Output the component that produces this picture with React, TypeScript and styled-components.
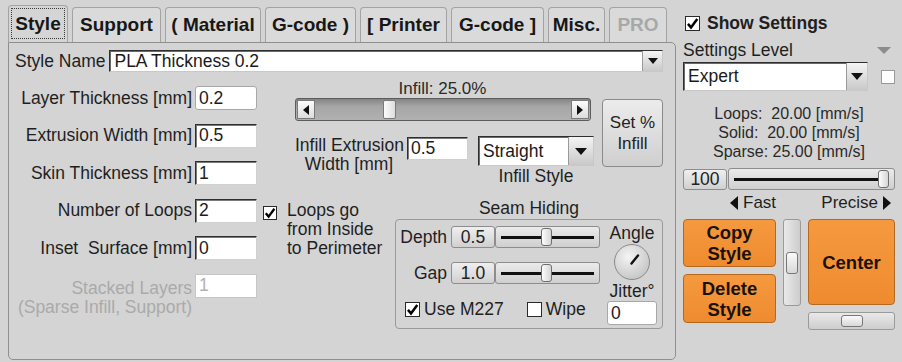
import React from 'react';
import styled, { createGlobalStyle, css } from 'styled-components';

const FONT = `"Liberation Sans", Arial, sans-serif`;

const GlobalStyle = createGlobalStyle`
  html, body { margin: 0; padding: 0; background: #d4d4d4; }
  body { font-family: ${FONT}; color: #202020; }
  * { box-sizing: border-box; }
`;

const Root = styled.div`
  width: 902px;
  height: 362px;
  overflow: hidden;
  display: flex;
  align-items: flex-start;
  padding: 5px 0 0 8px;
  background: #d4d4d4;
`;

const Main = styled.div`
  width: 668px;
  display: flex;
  flex-direction: column;
  flex: none;
`;

const TabBar = styled.div`
  display: flex;
  align-items: flex-end;
  gap: 4px;
  height: 37px;
`;

const Tab = styled.div<{ $w: number; $active?: boolean; $disabled?: boolean }>`
  width: ${p => p.$w}px;
  height: ${p => (p.$active ? 37 : 35)}px;
  flex: none;
  border: 1px solid #a3a3a3;
  border-bottom: none;
  border-radius: 4px 4px 0 0;
  background: ${p => (p.$active ? '#d5d5d5' : '#dadada')};
  display: flex;
  align-items: center;
  justify-content: center;
  font: bold 19px ${FONT};
  color: ${p => (p.$disabled ? '#a8a8a8' : '#171717')};
  white-space: nowrap;
  ${p =>
    p.$active &&
    css`
      outline: 1px dotted #3a3a3a;
      outline-offset: -4px;
    `}
`;

const Panel = styled.div`
  height: 318px;
  border: 1px solid #8f8f8f;
  border-radius: 0 5px 5px 5px;
  padding: 7px 0 0 6px;
  display: flex;
  flex-direction: column;
`;

const Text = styled.span<{ $size?: number; $bold?: boolean; $disabled?: boolean }>`
  font-family: ${FONT};
  font-size: ${p => p.$size ?? 17.5}px;
  font-weight: ${p => (p.$bold ? 'bold' : 'normal')};
  color: ${p => (p.$disabled ? '#a9a9a9' : '#1f1f1f')};
  white-space: nowrap;
`;

const NameRow = styled.div`
  display: flex;
  align-items: center;
  gap: 4px;
  height: 22px;
`;

const Select = styled.div<{ $w: number; $h: number }>`
  width: ${p => p.$w}px;
  height: ${p => p.$h}px;
  flex: none;
  background: #fff;
  border: 1px solid;
  border-color: #2e2e2e #c8c8c8 #c8c8c8 #2e2e2e;
  box-shadow: inset 1px 1px 0 #6a6a6a;
  display: flex;
  align-items: center;
  padding-left: 4px;
  font: 17.5px ${FONT};
  color: #1a1a1a;
  white-space: nowrap;
`;

const DropBtn = styled.div<{ $w: number; $inset?: number }>`
  margin-left: auto;
  align-self: stretch;
  margin: ${p => p.$inset ?? 0}px ${p => p.$inset ?? 0}px ${p => p.$inset ?? 0}px auto;
  width: ${p => p.$w}px;
  background: linear-gradient(#f4f4f4, #c9c9c9);
  border-left: 1px solid #9a9a9a;
  display: flex;
  align-items: center;
  justify-content: center;
`;

const DownTri = styled.span<{ $color?: string; $w?: number; $h?: number }>`
  width: 0;
  height: 0;
  border-left: ${p => (p.$w ?? 12) / 2}px solid transparent;
  border-right: ${p => (p.$w ?? 12) / 2}px solid transparent;
  border-top: ${p => p.$h ?? 7}px solid ${p => p.$color ?? '#111'};
`;

const SideTri = styled.span<{ $dir: 'left' | 'right'; $w?: number; $h?: number }>`
  width: 0;
  height: 0;
  flex: none;
  border-top: ${p => (p.$h ?? 10) / 2}px solid transparent;
  border-bottom: ${p => (p.$h ?? 10) / 2}px solid transparent;
  ${p =>
    p.$dir === 'left'
      ? css`border-right: ${p.$w ?? 6}px solid #111;`
      : css`border-left: ${p.$w ?? 6}px solid #111;`}
`;

const Body = styled.div`
  display: flex;
  margin-top: 8px;
`;

const FormCol = styled.div`
  width: 246px;
  margin-left: -3px;
  padding-top: 6px;
  display: flex;
  flex-direction: column;
  gap: 13.5px;
  flex: none;
`;

const FormRow = styled.div<{ $top?: boolean }>`
  display: flex;
  align-items: ${p => (p.$top ? 'flex-start' : 'center')};
  min-height: 24px;
`;

const FormLabel = styled.div<{ $disabled?: boolean }>`
  width: 180px;
  margin-right: 3px;
  text-align: right;
  font: 17.5px/19px ${FONT};
  color: ${p => (p.$disabled ? '#aaaaaa' : '#1f1f1f')};
  white-space: nowrap;
  padding-top: ${p => (p.$disabled ? 5 : 0)}px;
`;

const Field = styled.div<{ $w: number; $h: number; $variant?: 'soft' | 'sunken' | 'disabled' }>`
  width: ${p => p.$w}px;
  height: ${p => p.$h}px;
  flex: none;
  background: #fff;
  display: flex;
  align-items: center;
  padding-left: 3px;
  font: 17.5px ${FONT};
  color: #1c1c1c;
  border: 1px solid;
  border-color: #2f2f2f #d0d0d0 #d0d0d0 #2f2f2f;
  box-shadow: inset 1px 1px 0 #7a7a7a;
  ${p =>
    p.$variant === 'soft' &&
    css`
      border: 1px solid #a8a8a8;
      border-radius: 3px;
      box-shadow: none;
    `}
  ${p =>
    p.$variant === 'disabled' &&
    css`
      border: 1px solid #c6c6c6;
      box-shadow: none;
      color: #b2b2b2;
    `}
`;

const RightArea = styled.div`
  flex: 1;
  display: flex;
  flex-direction: column;
`;

const InfillSection = styled.div`
  display: flex;
  margin-left: 37px;
  gap: 9px;
`;

const InfillMain = styled.div`
  width: 298px;
  display: flex;
  flex-direction: column;
`;

const InfillCaption = styled.div`
  width: 295px;
  height: 18px;
  text-align: center;
  font: 17px/18px ${FONT};
  color: #2a2a2a;
`;

const HScroll = styled.div`
  position: relative;
  width: 296px;
  height: 23px;
  border: 1px solid #5c5c5c;
  border-radius: 3px;
  background: linear-gradient(#858585, #a6a6a6 35%, #b1b1b1);
  display: flex;
  justify-content: space-between;
  align-items: center;
  padding: 0 1px;
`;

const ArrowBtn = styled.div`
  width: 18px;
  height: 19px;
  background: linear-gradient(#fdfdfd, #dcdcdc);
  border: 1px solid #7a7a7a;
  display: flex;
  align-items: center;
  justify-content: center;
`;

const ScrollThumb = styled.div`
  position: absolute;
  top: 1px;
  width: 13px;
  height: 19px;
  background: linear-gradient(90deg, #fbfbfb, #dedede);
  border: 1px solid #7a7a7a;
  border-radius: 2px;
`;

const InfillControls = styled.div`
  display: flex;
  align-items: flex-start;
  margin-top: 15px;
`;

const ExtLabel = styled.div`
  width: 108px;
  text-align: center;
  font: 17.5px/19px ${FONT};
  color: #1f1f1f;
  margin-right: 4px;
  white-space: nowrap;
`;

const StyleCol = styled.div`
  margin-left: 10px;
  display: flex;
  flex-direction: column;
  align-items: center;
`;

const Caption = styled.div`
  font: 17.5px/21px ${FONT};
  color: #1f1f1f;
  white-space: nowrap;
`;

const RaisedButton = styled.div<{ $w: number; $h: number }>`
  width: ${p => p.$w}px;
  height: ${p => p.$h}px;
  flex: none;
  border: 1px solid #8a8a8a;
  border-radius: 4px;
  background: linear-gradient(#ececec, #cfcfcf);
  display: flex;
  align-items: center;
  justify-content: center;
  text-align: center;
  font: 17px/21px ${FONT};
  color: #222;
`;

const SetButton = styled(RaisedButton)`
  margin-top: 19px;
`;

const BottomRow = styled.div`
  display: flex;
  align-items: flex-start;
`;

const LoopsNote = styled.div`
  width: 137px;
  padding: 19px 0 0 5px;
  display: flex;
  align-items: flex-start;
  gap: 10px;
`;

const NoteText = styled.div`
  font: 17.5px/19px ${FONT};
  color: #1f1f1f;
  margin-top: -5px;
  white-space: nowrap;
`;

const CheckBoxBox = styled.span<{ $size: number; $soft?: boolean }>`
  width: ${p => p.$size}px;
  height: ${p => p.$size}px;
  flex: none;
  background: #fff;
  border: 1px solid ${p => (p.$soft ? '#9a9a9a' : '#2a2a2a')};
  display: inline-flex;
  align-items: center;
  justify-content: center;
  margin-top: ${p => (p.$soft ? 0 : 0)}px;
`;

const SeamSection = styled.div`
  width: 268px;
  margin-top: 11px;
  display: flex;
  flex-direction: column;
`;

const SeamTitle = styled.div`
  text-align: center;
  font: 17.5px/21px ${FONT};
  color: #1f1f1f;
`;

const SeamBox = styled.div`
  height: 110px;
  border: 1px solid #9a9a9a;
  border-radius: 4px;
  display: flex;
  padding: 6px 5px 0 0;
  gap: 7px;
`;

const SeamLeft = styled.div`
  width: 204px;
  display: flex;
  flex-direction: column;
`;

const SeamRow = styled.div<{ $mt?: number }>`
  display: flex;
  align-items: center;
  height: 22px;
  margin-top: ${p => p.$mt ?? 0}px;
`;

const SeamLabel = styled.div`
  width: 51px;
  text-align: right;
  margin-right: 4px;
  font: 17.5px ${FONT};
  color: #1f1f1f;
`;

const ValueBox = styled.div<{ $w: number }>`
  width: ${p => p.$w}px;
  height: 22px;
  flex: none;
  border: 1px solid #8d8d8d;
  border-radius: 3px;
  background: linear-gradient(#efefef, #d0d0d0);
  display: flex;
  align-items: center;
  justify-content: center;
  font: 17.5px ${FONT};
  color: #222;
`;

const Track = styled.div<{ $w: number }>`
  position: relative;
  width: ${p => p.$w}px;
  height: 22px;
  flex: none;
  border: 1px solid #8d8d8d;
  border-radius: 3px;
  background: linear-gradient(#ebebeb, #cfcfcf);
  &::before {
    content: '';
    position: absolute;
    left: 5px;
    right: 5px;
    top: 50%;
    height: 3px;
    margin-top: -1.5px;
    background: #111;
  }
`;

const Thumb = styled.div`
  position: absolute;
  top: 1px;
  bottom: 1px;
  width: 11px;
  border: 1px solid #6e6e6e;
  border-radius: 3px;
  background: linear-gradient(90deg, #fcfcfc, #d6d6d6);
`;

const CheckRow = styled.div`
  display: flex;
  align-items: center;
  height: 18px;
  margin-top: 16px;
  padding-left: 9px;
`;

const CheckItem = styled.div<{ $gap?: number }>`
  display: flex;
  align-items: center;
  gap: 4px;
  margin-right: ${p => p.$gap ?? 0}px;
`;

const SeamRight = styled.div`
  width: 51px;
  display: flex;
  flex-direction: column;
  align-items: center;
  padding-top: -3px;
  margin-top: -3px;
`;

const SmallCaption = styled.div`
  font: 17.5px/20px ${FONT};
  color: #1f1f1f;
  white-space: nowrap;
`;

/* Right column */

const RightCol = styled.div`
  width: 212px;
  margin-left: 7px;
  padding-top: 9px;
  display: flex;
  flex-direction: column;
  flex: none;
`;

const ShowRow = styled.div`
  display: flex;
  align-items: center;
  gap: 7px;
  height: 18px;
  padding-left: 2px;
`;

const LevelRow = styled.div`
  display: flex;
  align-items: center;
  justify-content: space-between;
  height: 20px;
  margin-top: 8px;
  padding-right: 4px;
`;

const ExpertRow = styled.div`
  display: flex;
  align-items: center;
  margin-top: 2px;
  gap: 13px;
`;

const Speeds = styled.div`
  margin-top: 13px;
  text-align: center;
  font: 16px/19px ${FONT};
  color: #2a2a2a;
  white-space: pre;
`;

const SpeedRow = styled.div`
  display: flex;
  align-items: center;
  margin-top: 7px;
  gap: 1px;
`;

const FastRow = styled.div`
  display: flex;
  align-items: center;
  justify-content: space-between;
  height: 16px;
  margin-top: 5px;
  padding: 0 4px 0 47px;
`;

const Dir = styled.div`
  display: flex;
  align-items: center;
  gap: 5px;
  font: 17px ${FONT};
  color: #1f1f1f;
`;

const ButtonsArea = styled.div`
  display: flex;
  gap: 7px;
  margin-top: 8px;
`;

const ButtonCol = styled.div<{ $w: number }>`
  width: ${p => p.$w}px;
  display: flex;
  flex-direction: column;
  gap: 7px;
`;

const OrangeButton = styled.div<{ $h: number }>`
  height: ${p => p.$h}px;
  border: 1px solid #b5681f;
  border-radius: 4px;
  background: linear-gradient(#f5993f, #ef8b2f);
  display: flex;
  align-items: center;
  justify-content: center;
  text-align: center;
  font: bold 18.5px/21px ${FONT};
  color: #1a1208;
`;

const MiniScroll = styled.div<{ $vertical?: boolean }>`
  position: relative;
  ${p =>
    p.$vertical
      ? css`
          width: 18px;
          height: 87px;
          flex-direction: column;
        `
      : css`
          height: 18px;
        `}
  border: 1px solid #9a9a9a;
  border-radius: 3px;
  background: linear-gradient(${p => (p.$vertical ? '90deg' : '180deg')}, #e9e9e9, #cdcdcd);
  display: flex;
  align-items: center;
  justify-content: center;
`;

const MiniThumb = styled.div<{ $vertical?: boolean }>`
  ${p =>
    p.$vertical
      ? css`
          width: 12px;
          height: 22px;
        `
      : css`
          width: 22px;
          height: 12px;
        `}
  border: 1px solid #777;
  border-radius: 3px;
  background: linear-gradient(#fafafa, #d8d8d8);
`;

function CheckBox({ checked, size = 14, soft }: { checked?: boolean; size?: number; soft?: boolean }) {
  return (
    <CheckBoxBox $size={size} $soft={soft}>
      {checked && (
        <svg width={size - 2} height={size - 2} viewBox="0 0 12 12">
          <path d="M1.8 6.3 L4.6 9.6 L10.4 1.8" stroke="#000" strokeWidth="2.3" fill="none" strokeLinejoin="miter" />
        </svg>
      )}
    </CheckBoxBox>
  );
}

function Slider({ width, pos }: { width: number; pos: number }) {
  return (
    <Track $w={width}>
      <Thumb style={{ left: pos }} />
    </Track>
  );
}

function Dial() {
  return (
    <svg width="38" height="38" viewBox="0 0 38 38">
      <defs>
        <radialGradient id="dialg" cx="40%" cy="35%" r="70%">
          <stop offset="0%" stopColor="#f4f4f4" />
          <stop offset="100%" stopColor="#c4c4c4" />
        </radialGradient>
      </defs>
      <circle cx="19" cy="19" r="17.5" fill="url(#dialg)" stroke="#8a8a8a" strokeWidth="1" />
      <line x1="18.5" y1="20.5" x2="25" y2="12.5" stroke="#111" strokeWidth="2.4" strokeLinecap="round" />
    </svg>
  );
}

const tabs = [
  { label: 'Style', w: 60, active: true },
  { label: 'Support', w: 89 },
  { label: '( Material', w: 96 },
  { label: 'G-code )', w: 91 },
  { label: '[ Printer', w: 87 },
  { label: 'G-code ]', w: 93 },
  { label: 'Misc.', w: 57 },
  { label: 'PRO', w: 58, disabled: true },
];

const formRows = [
  { label: 'Layer Thickness [mm]', value: '0.2', variant: 'soft' as const },
  { label: 'Extrusion Width [mm]', value: '0.5' },
  { label: 'Skin Thickness [mm]', value: '1' },
  { label: 'Number of Loops', value: '2' },
  { label: 'Inset  Surface [mm]', value: '0' },
];

export default function App() {
  return (
    <>
      <GlobalStyle />
      <Root>
        <Main>
          <TabBar>
            {tabs.map(t => (
              <Tab key={t.label} $w={t.w} $active={t.active} $disabled={t.disabled}>
                {t.label}
              </Tab>
            ))}
          </TabBar>
          <Panel>
            <NameRow>
              <Text>Style Name</Text>
              <Select $w={554} $h={22}>
                PLA Thickness 0.2
                <DropBtn $w={20}>
                  <DownTri $w={11} $h={6} />
                </DropBtn>
              </Select>
            </NameRow>
            <Body>
              <FormCol>
                {formRows.map(r => (
                  <FormRow key={r.label}>
                    <FormLabel style={{ whiteSpace: 'pre' }}>{r.label}</FormLabel>
                    <Field $w={62} $h={24} $variant={r.variant}>
                      {r.value}
                    </Field>
                  </FormRow>
                ))}
                <FormRow $top>
                  <FormLabel $disabled>
                    Stacked Layers
                    <br />
                    (Sparse Infill, Support)
                  </FormLabel>
                  <Field $w={62} $h={24} $variant="disabled">
                    1
                  </Field>
                </FormRow>
              </FormCol>
              <RightArea>
                <InfillSection>
                  <InfillMain>
                    <InfillCaption>Infill: 25.0%</InfillCaption>
                    <HScroll>
                      <ArrowBtn>
                        <SideTri $dir="left" $w={6} $h={11} />
                      </ArrowBtn>
                      <ScrollThumb style={{ left: 87 }} />
                      <ArrowBtn>
                        <SideTri $dir="right" $w={6} $h={11} />
                      </ArrowBtn>
                    </HScroll>
                    <InfillControls>
                      <ExtLabel>
                        Infill Extrusion
                        <br />
                        Width [mm]
                      </ExtLabel>
                      <Field $w={61} $h={23} style={{ marginTop: 1 }}>
                        0.5
                      </Field>
                      <StyleCol>
                        <Select $w={116} $h={30}>
                          Straight
                          <DropBtn $w={25}>
                            <DownTri $w={13} $h={7} />
                          </DropBtn>
                        </Select>
                        <Caption>Infill Style</Caption>
                      </StyleCol>
                    </InfillControls>
                  </InfillMain>
                  <SetButton $w={61} $h={68}>
                    Set %
                    <br />
                    Infill
                  </SetButton>
                </InfillSection>
                <BottomRow>
                  <LoopsNote>
                    <CheckBox checked />
                    <NoteText>
                      Loops go
                      <br />
                      from Inside
                      <br />
                      to Perimeter
                    </NoteText>
                  </LoopsNote>
                  <SeamSection>
                    <SeamTitle>Seam Hiding</SeamTitle>
                    <SeamBox>
                      <SeamLeft>
                        <SeamRow>
                          <SeamLabel>Depth</SeamLabel>
                          <ValueBox $w={44}>0.5</ValueBox>
                          <Slider width={105} pos={45} />
                        </SeamRow>
                        <SeamRow $mt={14}>
                          <SeamLabel>Gap</SeamLabel>
                          <ValueBox $w={44}>1.0</ValueBox>
                          <Slider width={105} pos={45} />
                        </SeamRow>
                        <CheckRow>
                          <CheckItem $gap={23}>
                            <CheckBox checked size={15} />
                            <Text>Use M227</Text>
                          </CheckItem>
                          <CheckItem>
                            <CheckBox size={15} />
                            <Text>Wipe</Text>
                          </CheckItem>
                        </CheckRow>
                      </SeamLeft>
                      <SeamRight>
                        <SmallCaption>Angle</SmallCaption>
                        <Dial />
                        <SmallCaption>Jitter°</SmallCaption>
                        <Field $w={50} $h={24} $variant="soft">
                          0
                        </Field>
                      </SeamRight>
                    </SeamBox>
                  </SeamSection>
                </BottomRow>
              </RightArea>
            </Body>
          </Panel>
        </Main>
        <RightCol>
          <ShowRow>
            <CheckBox checked size={15} />
            <Text $bold $size={17.5}>
              Show Settings
            </Text>
          </ShowRow>
          <LevelRow>
            <Text>Settings Level</Text>
            <DownTri $color="#8c8c8c" $w={14} $h={7} />
          </LevelRow>
          <ExpertRow>
            <Select $w={185} $h={29}>
              Expert
              <DropBtn $w={21}>
                <DownTri $w={12} $h={7} />
              </DropBtn>
            </Select>
            <CheckBox size={14} soft />
          </ExpertRow>
          <Speeds>{'Loops:  20.00 [mm/s]\nSolid:  20.00 [mm/s]\nSparse: 25.00 [mm/s]'}</Speeds>
          <SpeedRow>
            <ValueBox $w={44} style={{ height: 21 }}>
              100
            </ValueBox>
            <Slider width={167} pos={149} />
          </SpeedRow>
          <FastRow>
            <Dir>
              <SideTri $dir="left" $w={8} $h={15} />
              Fast
            </Dir>
            <Dir>
              Precise
              <SideTri $dir="right" $w={8} $h={15} />
            </Dir>
          </FastRow>
          <ButtonsArea>
            <ButtonCol $w={93}>
              <OrangeButton $h={48}>
                Copy
                <br />
                Style
              </OrangeButton>
              <OrangeButton $h={49}>
                Delete
                <br />
                Style
              </OrangeButton>
            </ButtonCol>
            <MiniScroll $vertical>
              <MiniThumb $vertical />
            </MiniScroll>
            <ButtonCol $w={87}>
              <OrangeButton $h={86}>Center</OrangeButton>
              <MiniScroll>
                <MiniThumb />
              </MiniScroll>
            </ButtonCol>
          </ButtonsArea>
        </RightCol>
      </Root>
    </>
  );
}
